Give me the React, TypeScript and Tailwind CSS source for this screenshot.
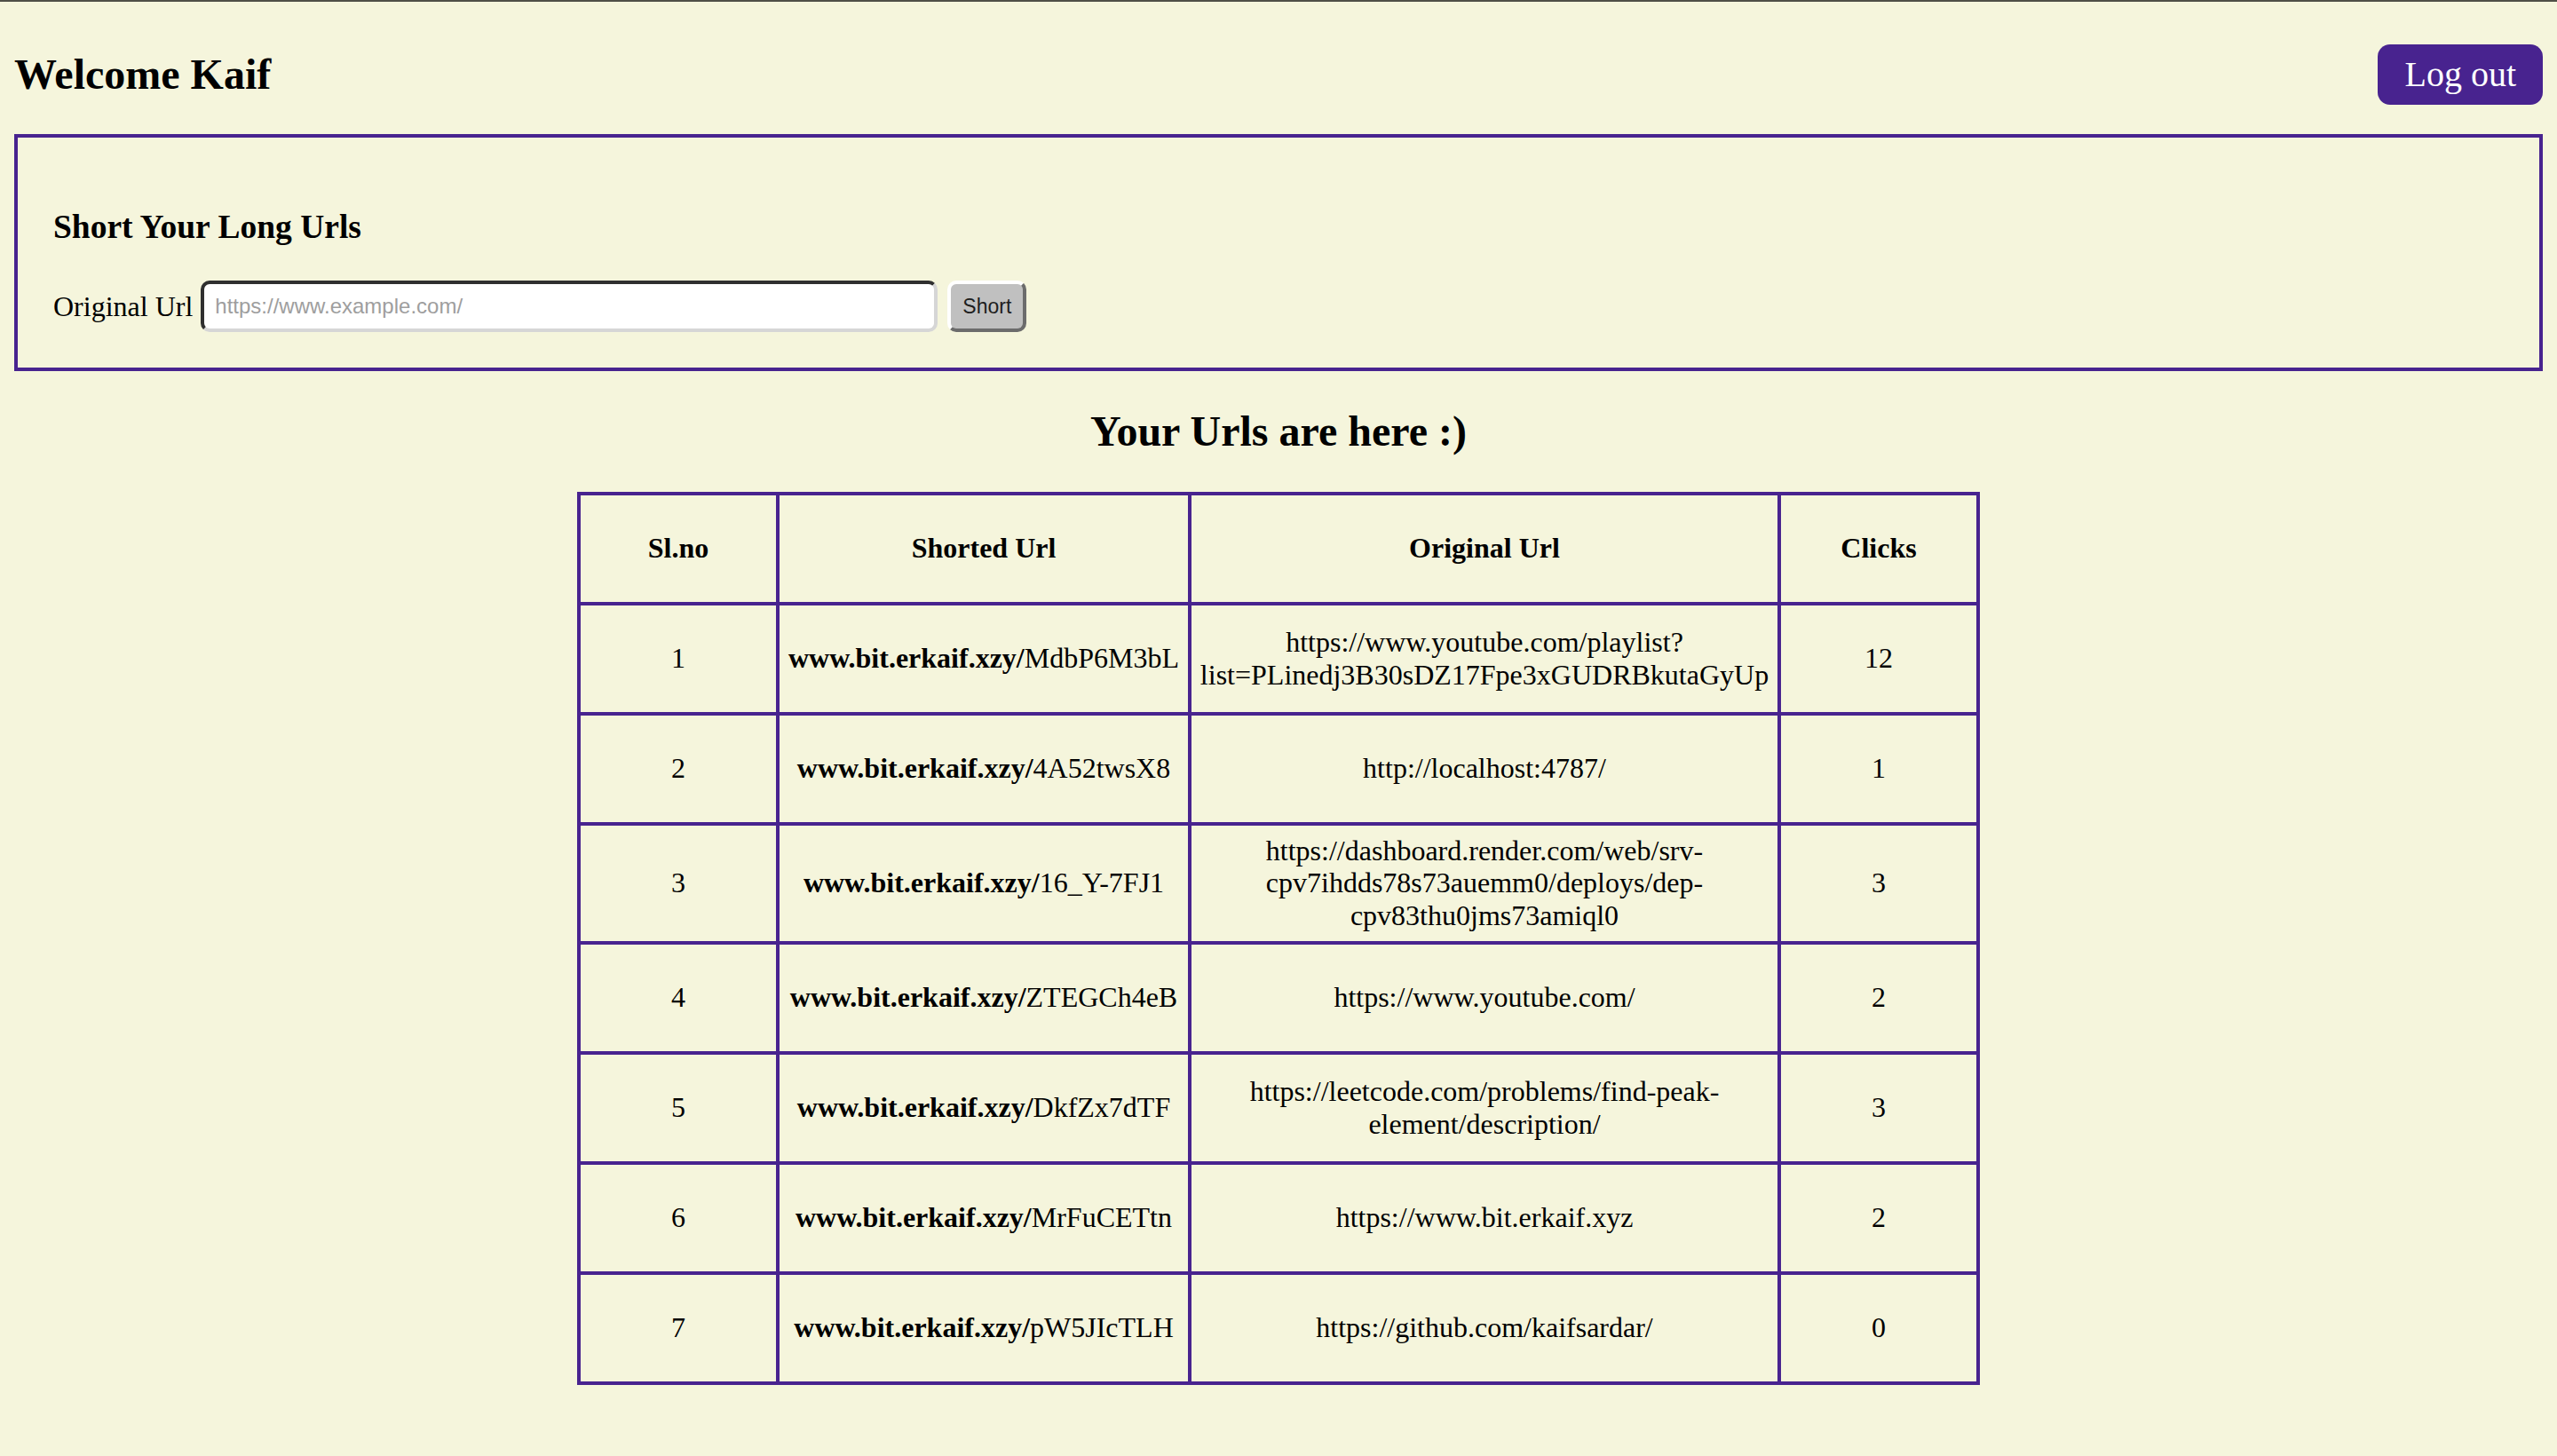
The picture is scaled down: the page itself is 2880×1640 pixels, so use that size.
import React from 'react';

type UrlRow = {
  id: number;
  code: string;
  original: string;
  clicks: number;
};

const rows: UrlRow[] = [
  { id: 1, code: 'MdbP6M3bL', original: 'https://www.youtube.com/playlist?list=PLinedj3B30sDZ17Fpe3xGUDRBkutaGyUp', clicks: 12 },
  { id: 2, code: '4A52twsX8', original: 'http://localhost:4787/', clicks: 1 },
  { id: 3, code: '16_Y-7FJ1', original: 'https://dashboard.render.com/web/srv-cpv7ihdds78s73auemm0/deploys/dep-cpv83thu0jms73amiql0', clicks: 3 },
  { id: 4, code: 'ZTEGCh4eB', original: 'https://www.youtube.com/', clicks: 2 },
  { id: 5, code: 'DkfZx7dTF', original: 'https://leetcode.com/problems/find-peak-element/description/', clicks: 3 },
  { id: 6, code: 'MrFuCETtn', original: 'https://www.bit.erkaif.xyz', clicks: 2 },
  { id: 7, code: 'pW5JIcTLH', original: 'https://github.com/kaifsardar/', clicks: 0 },
];

const cell = 'h-[124px] border-4 border-[#48238f] px-[8px] py-[10px] text-center align-middle';

export default function App() {
  return (
    <div className="min-h-screen border-t-2 border-[#4f4f47] bg-[#f5f5dc] px-[16px] pb-[60px] pt-[14px] font-['Liberation_Serif',serif] text-[32px] leading-[1.15] text-black">
      <header className="flex items-center justify-between">
        <h2 className="my-[40px] text-[48px] font-bold">Welcome Kaif</h2>
        <button className="h-[68px] rounded-[14px] bg-[#48238f] px-[30px] text-[40px] text-white">
          Log out
        </button>
      </header>

      <section className="border-4 border-[#48238f] p-[40px]">
        <h3 className="my-[39px] text-[37.5px] font-bold">Short Your Long Urls</h3>
        <div className="flex items-center">
          <label className="mr-[9px]">Original Url</label>
          <input
            type="text"
            placeholder="https://www.example.com/"
            className="h-[58px] w-[830px] rounded-[10px] border-4 border-t-[#2f2f2f] border-l-[#2f2f2f] border-b-[#d6d6d6] border-r-[#d6d6d6] bg-white px-[12px] font-['Liberation_Sans',Arial,sans-serif] text-[24px] outline-none placeholder:text-[#9e9e9e]"
          />
          <button className="ml-[11px] h-[58px] w-[89px] rounded-[10px] border-4 border-t-white border-l-white border-b-[#6c6c6c] border-r-[#6c6c6c] bg-[#c0c0c0] font-['Liberation_Sans',Arial,sans-serif] text-[23px] text-[#1e1e1e]">
            Short
          </button>
        </div>
      </section>

      <h2 className="my-[40px] text-center text-[48px] font-bold">Your Urls are here :)</h2>

      <table className="mx-auto w-[1576px] table-fixed border-collapse">
        <colgroup>
          <col className="w-[224px]" />
          <col className="w-[464px]" />
          <col className="w-[664px]" />
          <col className="w-[224px]" />
        </colgroup>
        <thead>
          <tr>
            <th className={cell}>Sl.no</th>
            <th className={cell}>Shorted Url</th>
            <th className={cell}>Original Url</th>
            <th className={cell}>Clicks</th>
          </tr>
        </thead>
        <tbody>
          {rows.map((row) => (
            <tr key={row.id}>
              <td className={cell}>{row.id}</td>
              <td className={cell}>
                <b>www.bit.erkaif.xzy/</b>
                {row.code}
              </td>
              <td className={cell}>{row.original}</td>
              <td className={cell}>{row.clicks}</td>
            </tr>
          ))}
        </tbody>
      </table>
    </div>
  );
}
